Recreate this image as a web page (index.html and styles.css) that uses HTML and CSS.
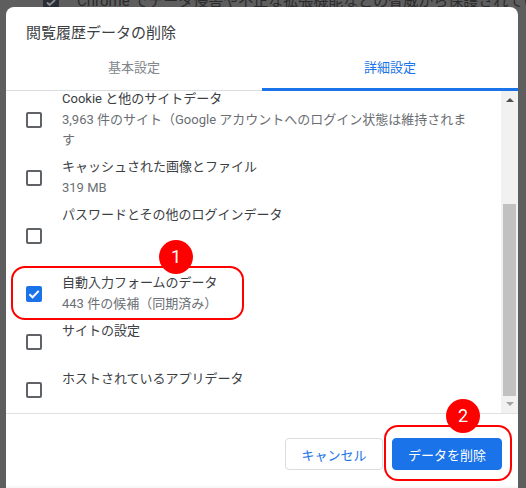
FILE: index.html
```html
<!DOCTYPE html>
<html lang="ja">
<head>
    <meta charset="UTF-8">
    <meta name="viewport" content="width=device-width, initial-scale=1.0">
    <title>閲覧履歴データの削除</title>
    <link rel="stylesheet" href="styles.css">
</head>
<body>
    <!-- Page behind the dialog, only a sliver shows at the top -->
    <div class="behind">
        <span class="behind-check">
            <svg viewBox="0 0 16 7" width="16" height="7"><path d="M4 2.5 6.6 5 12 0" fill="none" stroke="#8a8a8a" stroke-width="2"/></svg>
        </span>
        <span class="behind-text">Chrome でデータ侵害や不正な拡張機能などの脅威から保護されているか確認</span>
    </div>

    <div class="dialog">
        <h1 class="title">閲覧履歴データの削除</h1>
        <div class="tabs">
            <div class="tab">基本設定</div>
            <div class="tab active">詳細設定</div>
        </div>

        <div class="body">
            <div class="list">
                <div class="row">
                    <span class="check"></span>
                    <div class="text">
                        <div class="label">Cookie と他のサイトデータ</div>
                        <div class="sub">3,963 件のサイト（Google アカウントへのログイン状態は維持されます</div>
                    </div>
                </div>
                <div class="row">
                    <span class="check"></span>
                    <div class="text">
                        <div class="label">キャッシュされた画像とファイル</div>
                        <div class="sub">319 MB</div>
                    </div>
                </div>
                <div class="row">
                    <span class="check"></span>
                    <div class="text tall">
                        <div class="label">パスワードとその他のログインデータ</div>
                    </div>
                </div>
                <div class="row">
                    <span class="check checked">
                        <svg viewBox="0 0 16 16" width="16" height="16"><path d="M3.4 8.2 6.6 11.3 12.7 4.9" fill="none" stroke="#fff" stroke-width="2"/></svg>
                    </span>
                    <div class="text">
                        <div class="label">自動入力フォームのデータ</div>
                        <div class="sub">443 件の候補（同期済み）</div>
                    </div>
                </div>
                <div class="row">
                    <span class="check"></span>
                    <div class="text">
                        <div class="label">サイトの設定</div>
                    </div>
                </div>
                <div class="row">
                    <span class="check"></span>
                    <div class="text">
                        <div class="label">ホストされているアプリデータ</div>
                    </div>
                </div>
            </div>
            <div class="scrollbar">
                <span class="arrow up"></span>
                <div class="track"><div class="thumb"></div></div>
                <span class="arrow down"></span>
            </div>
        </div>

        <div class="footer">
            <button class="btn">キャンセル</button>
            <button class="btn primary">データを削除</button>
        </div>
    </div>

    <!-- Red annotations drawn over the screenshot -->
    <div class="mark mark-row"></div>
    <div class="badge badge-row">1</div>
    <div class="mark mark-btn"></div>
    <div class="badge badge-btn">2</div>
</body>
</html>
```

FILE: styles.css
```css
html, body {
    height: 100%;
}
body {
    margin: 0;
    background: #5e5e5e;
    font-family: Roboto, "Noto Sans CJK JP", sans-serif;
    color: #3c4043;
    overflow: hidden;
    position: relative;
    box-sizing: border-box;
    padding: 7px 8px 0 6px;
}
.behind {
    position: absolute;
    top: 0;
    left: 43px;
    height: 7px;
    width: 483px;
    overflow: hidden;
    white-space: nowrap;
    color: #2b2b2b;
    font-size: 15px;
    line-height: 14px;
}
.behind-check {
    position: absolute;
    left: 0;
    top: 0;
    width: 16px;
    height: 7px;
    background: #272e3a;
}
.behind-check svg {
    display: block;
}
.behind-text {
    position: absolute;
    left: 34px;
    top: -6px;
}
.dialog {
    position: relative;
    height: 100%;
    box-sizing: border-box;
    background: #fff;
    border-bottom: 2px solid #f8f8f8;
    border-radius: 8px 8px 0 0;
    display: flex;
    flex-direction: column;
    overflow: hidden;
}
.title {
    margin: 0;
    padding: 16px 20px 0;
    height: 36px;
    box-sizing: border-box;
    font-size: 15px;
    line-height: 20px;
    font-weight: 400;
    color: #3c4043;
}
.tabs {
    display: flex;
    height: 48px;
}
.tab {
    flex: 1;
    font-size: 13px;
    line-height: 18px;
    padding-top: 16px;
    box-sizing: border-box;
    text-align: center;
    color: #80868b;
    border-bottom: 1px solid #dadce0;
}
.tab.active {
    color: #1a73e8;
    border-bottom: 3px solid #1a73e8;
}
.body {
    display: flex;
    height: 322px;
    border-bottom: 1px solid #e0e0e0;
}
.list {
    flex: 1;
    overflow: hidden;
    display: flex;
    flex-direction: column;
    gap: 8px;
    padding-right: 22px;
}
.row {
    display: flex;
    align-items: center;
    gap: 20px;
    padding-left: 20px;
    flex-shrink: 0;
}
.row:first-child {
    margin-top: -2px;
}
.check {
    width: 16px;
    height: 16px;
    box-sizing: border-box;
    border: 2px solid #5f6368;
    border-radius: 2px;
    flex-shrink: 0;
    margin-top: 1px;
}
.check.checked {
    background: #1a73e8;
    border: none;
}
.check svg {
    display: block;
}
.text {
    min-height: 40px;
    flex: 1;
}
.text.tall {
    min-height: 60px;
}
.label {
    font-size: 13px;
    line-height: 20px;
    color: #3c4043;
}
.sub {
    font-size: 13px;
    line-height: 20px;
    margin: 1px 0 -1px;
    color: #6b6f74;
}
.scrollbar {
    width: 17px;
    background: #f1f1f1;
    flex-shrink: 0;
    display: flex;
    flex-direction: column;
    align-items: center;
}
.arrow {
    width: 0;
    height: 0;
    border-left: 4px solid transparent;
    border-right: 4px solid transparent;
    flex-shrink: 0;
}
.arrow.up {
    border-bottom: 4px solid #505050;
    margin: 7px 0 6px;
}
.arrow.down {
    border-top: 4px solid #a3a3a3;
    margin: 6px 0 7px;
}
.track {
    flex: 1;
    width: 13px;
    display: flex;
    flex-direction: column;
    justify-content: flex-end;
}
.thumb {
    height: 192px;
    background: #c1c1c1;
}
.footer {
    flex: 1;
    display: flex;
    justify-content: flex-end;
    align-items: flex-start;
    gap: 9px;
    padding: 24px 16px 0 0;
}
.btn {
    height: 32px;
    width: 98px;
    font-family: inherit;
    font-size: 13px;
    background: #fff;
    color: #1a73e8;
    border: 1px solid #dadce0;
    border-radius: 4px;
    padding: 0;
}
.btn.primary {
    width: 110px;
    background: #1a73e8;
    border-color: #1a73e8;
    color: #fff;
}
.mark {
    position: absolute;
    box-sizing: border-box;
    border: 2px solid #f00;
    box-shadow: 0 0 0 1px rgba(255, 255, 255, 0.7);
}
.mark-row {
    left: 11px;
    top: 266px;
    width: 233px;
    height: 54px;
    border-radius: 14px;
}
.mark-btn {
    left: 384px;
    top: 425px;
    width: 128px;
    height: 56px;
    border-radius: 14px;
}
.badge {
    position: absolute;
    width: 34px;
    height: 34px;
    border-radius: 50%;
    background: #f00;
    color: #fff;
    font-size: 18px;
    line-height: 34px;
    text-align: center;
}
.badge-row {
    left: 159px;
    top: 240px;
}
.badge-btn {
    left: 446px;
    top: 399px;
}
```
